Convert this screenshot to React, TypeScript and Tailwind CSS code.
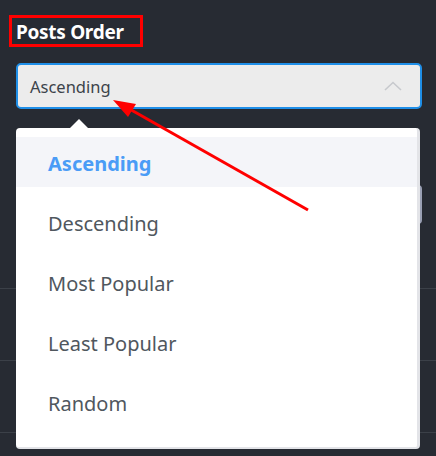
const options = ["Ascending", "Descending", "Most Popular", "Least Popular", "Random"];

function ChevronUp() {
  return (
    <svg width="18" height="10" viewBox="0 0 18 10" fill="none" aria-hidden="true">
      <path d="M1 9 L9 1.5 L17 9" stroke="#c7c9cd" strokeWidth="1.6" />
    </svg>
  );
}

export default function App() {
  return (
    <div className="relative h-[456px] w-[436px] overflow-hidden bg-[#272b33] font-['Noto_Sans','Open_Sans',sans-serif]">
      {/* section title, boxed in red */}
      <div className="ml-[9px] mt-[15px] flex h-[32px] w-[134px] items-center border-[3px] border-[#ff0000] pl-[4px] pt-[2px] text-[19px] font-bold leading-none tracking-[-0.3px] text-white">
        Posts Order
      </div>

      {/* select, open */}
      <div className="ml-[16px] mt-[16px] flex h-[46px] w-[406px] items-center justify-between rounded-[5px] border-2 border-[#1f8fe8] bg-[#ececec] pl-[12px] pr-[18px] text-[16.5px] text-[#3c434a]">
        <span className="pt-[3px]">Ascending</span>
        <ChevronUp />
      </div>

      {/* settings rows hidden behind the menu */}
      <div className="mt-[76px] flex h-[39px] items-center justify-end pr-[14px]">
        <div className="h-[39px] w-[300px] rounded-[4px] border-2 border-[#9aa0b4] bg-[#2e333b]" />
      </div>
      <div className="h-[65px] border-b border-[#3b4048]" />
      <div className="h-[72px] border-b border-[#3b4048]" />
      <div className="h-[72px] border-b border-[#3b4048]" />

      {/* dropdown menu */}
      <div className="absolute left-[16px] top-[128px] h-[321px] w-[404px] rounded-[4px] border-b-2 border-r-[3px] border-[#e3e4e8] bg-white pb-[20px] pt-[9px]">
        <div className="absolute -top-[9px] left-[54px] h-0 w-0 border-x-[9px] border-b-[9px] border-x-transparent border-b-white" />
        <ul className="flex flex-col gap-[10px]">
          {options.map((o, i) => (
            <li
              key={o}
              className={
                i === 0
                  ? "flex h-[50px] items-center bg-[#f4f5f9] pl-[32px] pt-[4px] text-[20px] font-bold text-[#4a9cf6]"
                  : "flex h-[50px] items-center pl-[32px] pt-[4px] text-[20px] text-[#50575e]"
              }
            >
              {o}
            </li>
          ))}
        </ul>
      </div>

      {/* annotation arrow */}
      <svg className="pointer-events-none absolute left-0 top-0" width="436" height="456" aria-hidden="true">
        <line x1="308" y1="210" x2="126" y2="107" stroke="#ff0000" strokeWidth="3" />
        <polygon points="113,100 136,104 128,117" fill="#ff0000" />
      </svg>
    </div>
  );
}
